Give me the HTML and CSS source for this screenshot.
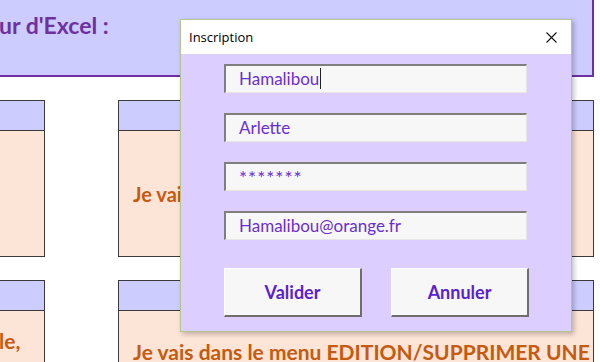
FILE: index.html
```html
<!DOCTYPE html>
<html lang="fr">
<head>
  <meta charset="UTF-8" />
  <title>Inscription</title>
  <link rel="stylesheet" href="styles.css">
</head>
<body>

  <!-- Feuille Excel en fond -->
  <div class="sheet">
    <div class="banner">
      <span class="banner-title">ur d'Excel :</span>
    </div>

    <div class="shapes">
      <div class="shape">
        <div class="shape-head"></div>
        <div class="shape-body"></div>
      </div>
      <div class="shape">
        <div class="shape-head"></div>
        <div class="shape-body"><p class="shape-text">Je vais</p></div>
      </div>
      <div class="shape">
        <div class="shape-head"></div>
        <div class="shape-body top"><p class="shape-text left">le,</p></div>
      </div>
      <div class="shape">
        <div class="shape-head"></div>
        <div class="shape-body top"><p class="shape-text wide">Je vais dans le menu EDITION/SUPPRIMER UNE</p></div>
      </div>
    </div>
  </div>

  <!-- Formulaire Inscription -->
  <div class="dialog">
    <div class="dialog-title">
      <span>Inscription</span>
      <svg class="close" width="11" height="11" viewBox="0 0 11 11">
        <path d="M0.5 0.5 L10.5 10.5 M10.5 0.5 L0.5 10.5" stroke="#111" stroke-width="1.1" fill="none"/>
      </svg>
    </div>
    <div class="dialog-body">
      <div class="field"><span class="caret">Hamalibou</span></div>
      <div class="field">Arlette</div>
      <div class="field stars">*******</div>
      <div class="field">Hamalibou@orange.fr</div>
      <div class="buttons">
        <button class="btn">Valider</button>
        <button class="btn">Annuler</button>
      </div>
    </div>
  </div>

</body>
</html>
```

FILE: styles.css
```css
body {
  margin: 0;
  padding: 0;
  width: 600px;
  height: 362px;
  overflow: hidden;
  background: #ffffff;
  font-family: Lato, "Open Sans", sans-serif;
  position: relative;
}

.sheet {
  width: 600px;
  height: 362px;
  overflow: hidden;
}

.banner {
  width: 592px;
  height: 75px;
  background-color: #ccccff;
  border-right: 2px solid #7030a0;
  border-bottom: 2px solid #7030a0;
}

.banner-title {
  display: block;
  padding-top: 11px;
  font-size: 23px;
  font-weight: bold;
  color: #7030a0;
  margin-left: -1px;
}

.shapes {
  display: grid;
  grid-template-columns: 76px 476px;
  column-gap: 73px;
  row-gap: 23px;
  margin-left: -31px;
  padding-top: 23px;
}

.shape {
  border: 1px solid #3a3a3a;
  background-color: #fce4d6;
  height: 155px;
  display: flex;
  flex-direction: column;
}

.shape-head {
  height: 29px;
  background-color: #ccccff;
  border-bottom: 1px solid #3a3a3a;
}

.shape-body {
  flex: 1;
  display: flex;
  align-items: center;
  padding-left: 14px;
  overflow: hidden;
}

.shape-body.top {
  align-items: flex-start;
  padding-top: 0;
}

.shape-text {
  margin: 0;
  font-size: 20px;
  font-weight: bold;
  color: #c55a11;
  white-space: nowrap;
}

.shape-text.left {
  margin-left: 15px;
  margin-top: 17px;
  font-size: 21px;
}

.shape-text.wide {
  margin-top: 28px;
  font-size: 21px;
}

.dialog {
  position: absolute;
  left: 180px;
  top: 19px;
  width: 390px;
  height: 311px;
  border: 1px solid #b4c68e;
  background-color: #dccfff;
  box-shadow: 2px 2px 5px rgba(0, 0, 0, 0.25);
  display: flex;
  flex-direction: column;
}

.dialog-title {
  height: 34px;
  background-color: #ffffff;
  display: flex;
  align-items: center;
  justify-content: space-between;
  padding: 0 14px 0 8px;
  font-family: "Open Sans", sans-serif;
  font-size: 13px;
  color: #000;
}

.close {
  display: block;
}

.dialog-body {
  display: flex;
  flex-direction: column;
  gap: 20px;
  padding: 10px 0 0 43px;
}

.field {
  width: 287px;
  height: 26px;
  background-color: #f7f7f7;
  border-top: 2px solid #7f7f7f;
  border-left: 2px solid #7f7f7f;
  border-right: 1px solid #e6e6e6;
  border-bottom: 1px solid #e6e6e6;
  padding-left: 13px;
  font-size: 17px;
  line-height: 26px;
  color: #6a2fd2;
}

.stars {
  letter-spacing: 1px;
  font-size: 19px;
  line-height: 28px;
}

.caret {
  border-right: 1px solid #222;
  padding-right: 1px;
}

.buttons {
  display: flex;
  gap: 29px;
  margin-top: 8px;
}

.btn {
  width: 138px;
  height: 49px;
  background-color: #f7f7f7;
  border-top: 1px solid #ffffff;
  border-left: 1px solid #ffffff;
  border-right: 2px solid #6e6e6e;
  border-bottom: 2px solid #6e6e6e;
  font-family: Lato, "Open Sans", sans-serif;
  font-size: 18px;
  font-weight: bold;
  color: #5a1fce;
  cursor: pointer;
  padding: 0;
}
```
